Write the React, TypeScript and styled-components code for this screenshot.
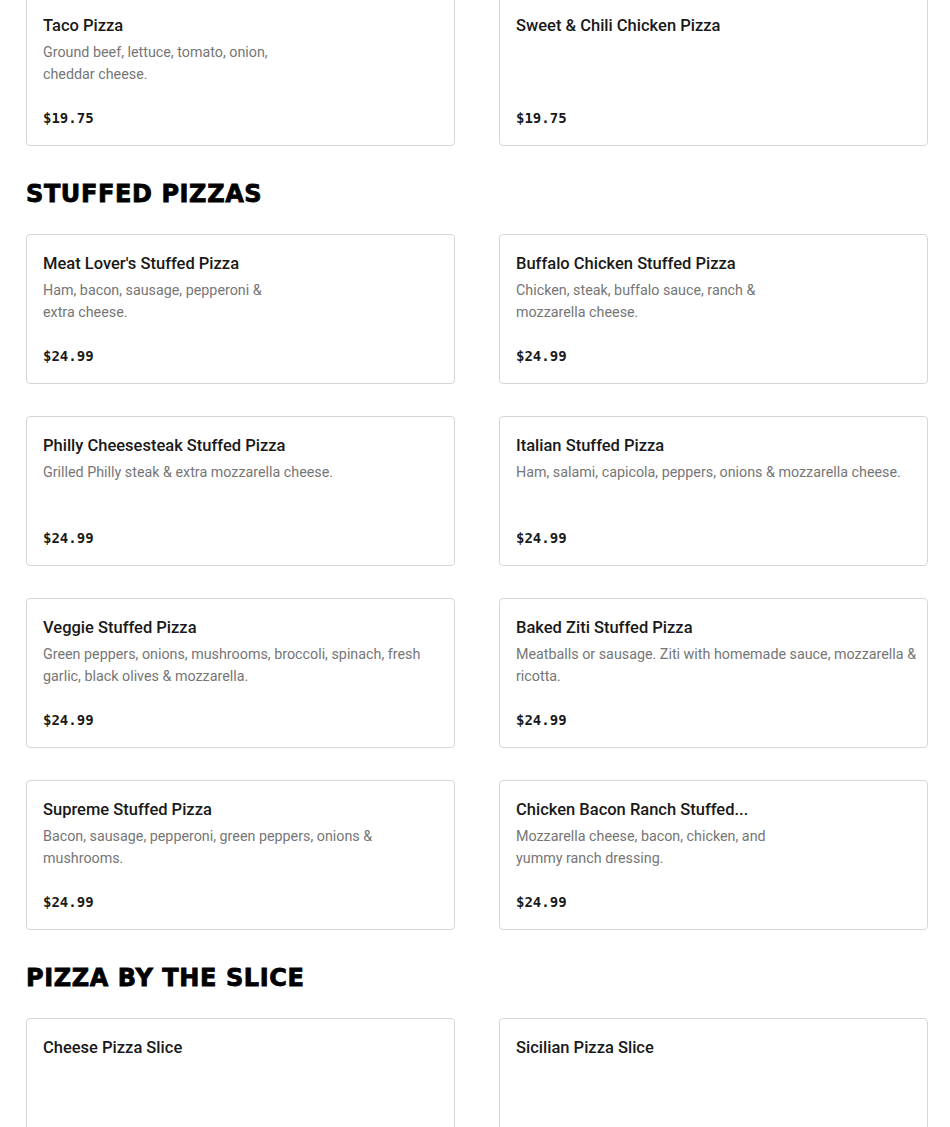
import React from "react";
import styled, { createGlobalStyle } from "styled-components";

const Global = createGlobalStyle`
  html, body { margin: 0; padding: 0; background: #fff; }
  body { font-family: Roboto, "Liberation Sans", sans-serif; color: #191919; -webkit-font-smoothing: antialiased; }
`;

const Page = styled.main`
  width: 902px;
  padding-left: 26px;
  margin-top: -4px;
`;

const Section = styled.section`
  & + & { margin-top: 32px; }
`;

const Heading = styled.h2`
  margin: 1px 0 24px;
  font-family: "DejaVu Sans", "Liberation Sans", sans-serif;
  font-size: 24px;
  line-height: 32px;
  font-weight: 700;
  letter-spacing: 0.6px;
  -webkit-text-stroke: 0.8px #000;
  color: #000;
  text-transform: uppercase;
`;

const Grid = styled.div`
  display: grid;
  grid-template-columns: 429px 429px;
  column-gap: 44px;
  row-gap: 32px;
`;

const Card = styled.article`
  box-sizing: border-box;
  height: 150px;
  border: 1px solid #d6d6d6;
  border-radius: 4px;
  padding: 17px 16px 16px;
  display: flex;
  flex-direction: column;
  background: #fff;
`;

const Title = styled.h3`
  margin: 0 0 3px;
  font-size: 16.5px;
  line-height: 24px;
  font-weight: 500;
  color: #191919;
  white-space: nowrap;
  overflow: hidden;
  text-overflow: ellipsis;
`;

const Desc = styled.p`
  margin: 0 -6px 0 0;
  font-size: 14.3px;
  line-height: 22px;
  color: #767676;
  white-space: pre-line;
  min-height: 44px;
`;

const Price = styled.div`
  margin-top: auto;
  margin-bottom: 1px;
  font-family: "DejaVu Sans Mono", "Liberation Mono", monospace;
  font-size: 14px;
  line-height: 20px;
  font-weight: 700;
  color: #191919;
`;

type Item = { name: string; desc?: string; price?: string };

const sections: { title?: string; items: Item[] }[] = [
  {
    items: [
      { name: "Taco Pizza", desc: "Ground beef, lettuce, tomato, onion,\ncheddar cheese.", price: "$19.75" },
      { name: "Sweet & Chili Chicken Pizza", price: "$19.75" },
    ],
  },
  {
    title: "Stuffed Pizzas",
    items: [
      { name: "Meat Lover's Stuffed Pizza", desc: "Ham, bacon, sausage, pepperoni &\nextra cheese.", price: "$24.99" },
      { name: "Buffalo Chicken Stuffed Pizza", desc: "Chicken, steak, buffalo sauce, ranch &\nmozzarella cheese.", price: "$24.99" },
      { name: "Philly Cheesesteak Stuffed Pizza", desc: "Grilled Philly steak & extra mozzarella cheese.", price: "$24.99" },
      { name: "Italian Stuffed Pizza", desc: "Ham, salami, capicola, peppers, onions & mozzarella cheese.", price: "$24.99" },
      { name: "Veggie Stuffed Pizza", desc: "Green peppers, onions, mushrooms, broccoli, spinach, fresh garlic, black olives & mozzarella.", price: "$24.99" },
      { name: "Baked Ziti Stuffed Pizza", desc: "Meatballs or sausage. Ziti with homemade sauce, mozzarella & ricotta.", price: "$24.99" },
      { name: "Supreme Stuffed Pizza", desc: "Bacon, sausage, pepperoni, green peppers, onions & mushrooms.", price: "$24.99" },
      { name: "Chicken Bacon Ranch Stuffed...", desc: "Mozzarella cheese, bacon, chicken, and\nyummy ranch dressing.", price: "$24.99" },
    ],
  },
  {
    title: "Pizza by the Slice",
    items: [{ name: "Cheese Pizza Slice" }, { name: "Sicilian Pizza Slice" }],
  },
];

export default function App() {
  return (
    <>
      <Global />
      <Page>
        {sections.map((s, i) => (
          <Section key={i}>
            {s.title && <Heading>{s.title}</Heading>}
            <Grid>
              {s.items.map((it) => (
                <Card key={it.name}>
                  <Title>{it.name}</Title>
                  <Desc>{it.desc ?? ""}</Desc>
                  {it.price && <Price>{it.price}</Price>}
                </Card>
              ))}
            </Grid>
          </Section>
        ))}
      </Page>
    </>
  );
}
